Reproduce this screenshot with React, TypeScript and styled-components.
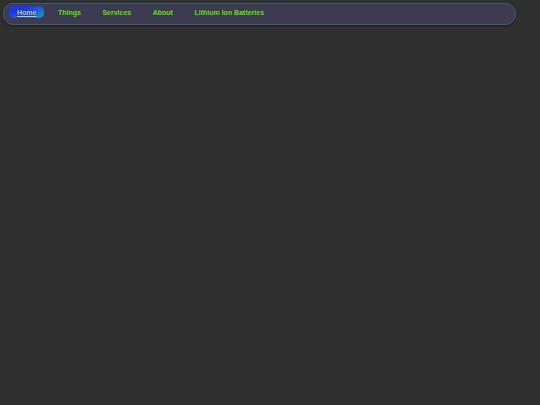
import React from 'react';
import styled, { createGlobalStyle } from 'styled-components';

const GlobalStyle = createGlobalStyle`
  html, body {
    margin: 0;
    padding: 0;
    background: #2f2f2f;
    height: 100%;
  }
  body {
    font-family: "Liberation Sans", Arial, sans-serif;
  }
`;

const Page = styled.div`
  padding: 3px 24px 0 3px;
  min-height: 405px;
  box-sizing: border-box;
`;

const NavBar = styled.nav`
  display: flex;
  align-items: flex-start;
  gap: 5.5px;
  height: 22px;
  box-sizing: border-box;
  padding: 2px 5px 0;
  background: #3c3b52;
  border: 1px solid #3f5f6e;
  border-radius: 10px;
  box-shadow: 0 1px 2px rgba(0, 0, 0, 0.45);
`;

const NavLink = styled.a<{ $active?: boolean }>`
  display: flex;
  align-items: center;
  height: 12px;
  padding: 0 8px;
  border-radius: 5px;
  font-size: 7px;
  font-weight: bold;
  text-decoration: ${p => (p.$active ? 'underline' : 'none')};
  color: ${p => (p.$active ? '#bcc6e2' : '#6fd42c')};
  text-shadow: ${p =>
    p.$active ? '0 0 2px #0a1240' : '0 0 2px rgba(40, 90, 20, 0.9)'};
  background: ${p =>
    p.$active ? 'linear-gradient(to bottom right, #1f35e8 30%, #1aa2b5 100%)' : 'none'};
  cursor: pointer;
  white-space: nowrap;
`;

const items = ['Home', 'Things', 'Services', 'About', 'Lithium Ion Batteries'];

export default function App() {
  return (
    <>
      <GlobalStyle />
      <Page>
        <NavBar>
          {items.map((label, i) => (
            <NavLink key={label} $active={i === 0}>
              {label}
            </NavLink>
          ))}
        </NavBar>
      </Page>
    </>
  );
}
